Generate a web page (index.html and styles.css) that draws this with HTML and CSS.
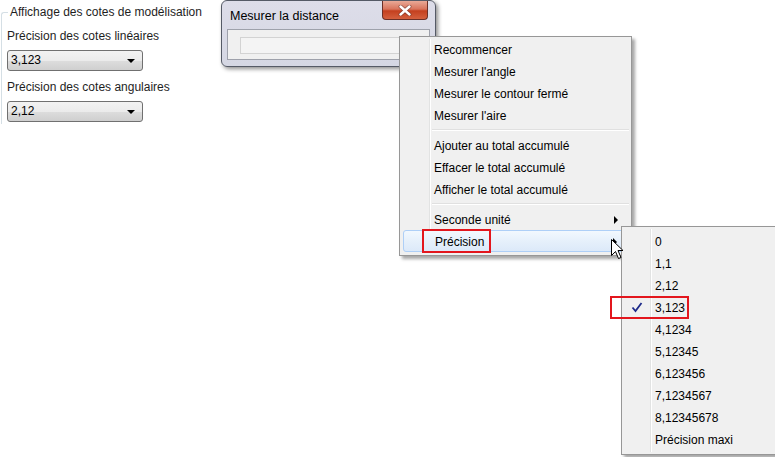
FILE: index.html
```html
<!DOCTYPE html>
<html lang="fr">
<head>
<meta charset="utf-8">
<title>Mesurer la distance</title>
<link rel="stylesheet" href="styles.css">
</head>
<body>
<div class="panel">
  <fieldset class="group">
    <legend class="group-title">Affichage des cotes de modélisation</legend>
    <div class="field-label">Précision des cotes linéaires</div>
    <div class="combo"><span>3,123</span><span class="combo-arrow"></span></div>
    <div class="field-label">Précision des cotes angulaires</div>
    <div class="combo"><span>2,12</span><span class="combo-arrow"></span></div>
  </fieldset>
</div>

<div class="window">
  <div class="titlebar">
    <span class="title">Mesurer la distance</span>
    <span class="close-btn">
      <svg width="14" height="11" viewBox="0 0 14 11"><path d="M2.5 1.5 L11.5 9.5 M11.5 1.5 L2.5 9.5" stroke="#5a2a24" stroke-width="4" stroke-linecap="round" opacity="0.55"/><path d="M2.5 1.5 L11.5 9.5 M11.5 1.5 L2.5 9.5" stroke="#fff" stroke-width="2.4" stroke-linecap="round"/></svg>
    </span>
  </div>
  <div class="client">
    <div class="textbox"></div>
  </div>
</div>

<div class="menu">
  <div class="gutter"></div>
  <div class="item">Recommencer</div>
  <div class="item">Mesurer l'angle</div>
  <div class="item">Mesurer le contour fermé</div>
  <div class="item">Mesurer l'aire</div>
  <div class="sep"></div>
  <div class="item">Ajouter au total accumulé</div>
  <div class="item">Effacer le total accumulé</div>
  <div class="item">Afficher le total accumulé</div>
  <div class="sep"></div>
  <div class="item">Seconde unité<span class="arrow"></span></div>
  <div class="item hot">Précision<span class="arrow"></span></div>
</div>

<div class="submenu">
  <div class="gutter sub-gutter"></div>
  <div class="item sub-item">0</div>
  <div class="item sub-item">1,1</div>
  <div class="item sub-item">2,12</div>
  <div class="item sub-item checked"><span class="check"><svg width="12" height="11" viewBox="0 0 12 11"><path d="M1.5 5.5 L4.5 9 L10.5 1" fill="none" stroke="#1d2a8a" stroke-width="1.8"/></svg></span>3,123</div>
  <div class="item sub-item">4,1234</div>
  <div class="item sub-item">5,12345</div>
  <div class="item sub-item">6,123456</div>
  <div class="item sub-item">7,1234567</div>
  <div class="item sub-item">8,12345678</div>
  <div class="item sub-item">Précision maxi</div>
</div>

<div class="mark mark-prec"></div>
<div class="mark mark-check"></div>

<svg class="cursor" width="13" height="22" viewBox="0 0 13 22">
  <path d="M0.5 0.5 L0.5 16.5 L4.5 12.5 L7.5 19.5 L10 18.5 L7 11.5 L12 11.5 Z" fill="#fff" stroke="#000" stroke-width="1" stroke-linejoin="miter"/>
</svg>
</body>
</html>
```
FILE: styles.css
```css
html, body {
  margin: 0;
  padding: 0;
  background: #ffffff;
}
body {
  width: 775px;
  height: 457px;
  overflow: hidden;
  position: relative;
  font-family: "Liberation Sans", Arial, sans-serif;
  font-size: 12px;
  color: #000;
}

/* left group box */
.panel {
  padding-top: 5px;
  width: 204px;
}
.group {
  margin: 0 0 0 1px;
  padding: 0 0 0 5px;
  border: 1px solid #d5dfe5;
  border-right: none;
  border-bottom: none;
  border-radius: 3px 0 0 0;
  height: 118px;
}
.group-title {
  padding: 0 2px;
  margin-left: 1px;
  color: #1e1e1e;
  line-height: 14px;
}
.field-label {
  margin-top: 10px;
  line-height: 14px;
  color: #1e1e1e;
}
.field-label + .combo { margin-top: 7px; }
.combo + .field-label { margin-top: 9px; }
.combo {
  width: 124px;
  height: 19px;
  border: 1px solid #707070;
  border-radius: 3px;
  background: linear-gradient(#f2f2f2 0%, #ebebeb 50%, #dddddd 51%, #cfcfcf 100%);
  display: flex;
  align-items: center;
  justify-content: space-between;
  padding: 0 7px 0 3px;
  box-sizing: content-box;
  line-height: 19px;
}
.combo-arrow {
  width: 0;
  height: 0;
  border-left: 4px solid transparent;
  border-right: 4px solid transparent;
  border-top: 4px solid #000;
}

/* dialog window */
.window {
  position: absolute;
  left: 221px;
  top: 0;
  width: 215px;
  height: 67px;
  border: 1px solid #555a66;
  border-radius: 6px;
  background: linear-gradient(#dddde9, #d5d7e3);
  box-shadow: 2px 2px 4px rgba(0, 0, 0, 0.45);
  box-sizing: border-box;
}
.titlebar {
  height: 28px;
  display: flex;
  align-items: flex-start;
  justify-content: space-between;
  padding: 0 7px 0 8px;
}
.title {
  margin-top: 8px;
  line-height: 14px;
  font-size: 12.5px;
  color: #000;
}
.close-btn {
  width: 46px;
  height: 19px;
  border: 1px solid #6b3027;
  border-top: none;
  border-radius: 0 0 4px 4px;
  background: linear-gradient(#e9a997 0%, #d8745c 45%, #c4401f 55%, #d4603e 100%);
  display: flex;
  align-items: center;
  justify-content: center;
  box-sizing: border-box;
}
.client {
  margin: 0 5px;
  height: 31px;
  border: 1px solid #9ea1ab;
  background: #f0f0f0;
  padding: 7px 0 0 12px;
  box-sizing: border-box;
}
.textbox {
  width: 190px;
  height: 15px;
  border: 1px solid #d3d3d3;
  background: #f4f4f4;
}

/* context menu */
.menu {
  position: absolute;
  left: 399px;
  top: 36px;
  width: 227px;
  padding: 1px 2px 3px 2px;
  background: #f0f0f0;
  border: 1px solid #979797;
  box-shadow: 3px 3px 3px rgba(0, 0, 0, 0.35);
}
.gutter {
  position: absolute;
  left: 29px;
  top: 2px;
  bottom: 2px;
  width: 1px;
  background: #e2e3e3;
  border-right: 1px solid #ffffff;
}
.item {
  position: relative;
  height: 21px;
  padding-top: 1px;
  line-height: 22px;
  padding-left: 32px;
  color: #000;
}
.sep {
  height: 8px;
  margin-left: 30px;
  position: relative;
}
.sep::before {
  content: "";
  position: absolute;
  left: 0;
  right: 0;
  top: 3px;
  height: 1px;
  background: #e0e0e0;
  border-bottom: 1px solid #ffffff;
}
.arrow {
  position: absolute;
  right: 11px;
  top: 8px;
  width: 0;
  height: 0;
  border-top: 4px solid transparent;
  border-bottom: 4px solid transparent;
  border-left: 4px solid #000;
}
.hot {
  margin: 0 1px;
  padding-left: 31px;
  height: 19px;
  padding-top: 1px;
  line-height: 20px;
  border: 1px solid #aecff7;
  border-radius: 3px;
  background: linear-gradient(#f2f8fe, #e6f0fb 50%, #dce9f9);
}
.hot .arrow { right: 10px; top: 7px; }

/* submenu */
.submenu {
  position: absolute;
  left: 621px;
  top: 226px;
  width: 160px;
  height: 224px;
  padding: 3px 2px 0 2px;
  background: #f0f0f0;
  border: 1px solid #979797;
  box-shadow: 3px 3px 3px rgba(0, 0, 0, 0.35);
}
.sub-gutter { left: 28px; }
.sub-item {
  padding-left: 31px;
}
.check {
  position: absolute;
  left: 4px;
  top: 0;
  width: 18px;
  height: 22px;
  display: flex;
  align-items: center;
  justify-content: center;
}

/* red annotation boxes */
.mark {
  position: absolute;
  border: 2px solid #e3161d;
  box-sizing: border-box;
}
.mark-prec {
  left: 422px;
  top: 229px;
  width: 69px;
  height: 24px;
}
.mark-check {
  left: 610px;
  top: 296px;
  width: 79px;
  height: 23px;
}

.cursor {
  position: absolute;
  left: 611px;
  top: 239px;
}
```
